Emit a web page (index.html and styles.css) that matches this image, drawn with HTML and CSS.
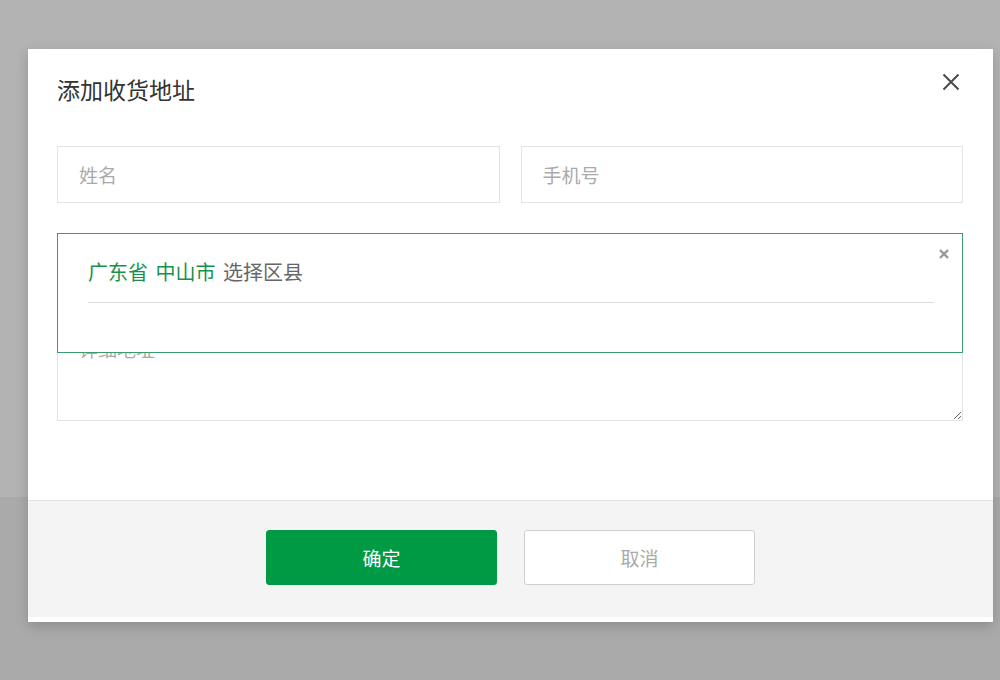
FILE: index.html
```html
<!DOCTYPE html>
<html lang="zh-CN">
<head>
    <meta charset="UTF-8">
    <meta name="viewport" content="width=device-width, initial-scale=1.0">
    <title>添加收货地址</title>
    <link rel="stylesheet" href="styles.css">
</head>
<body>
    <div class="dialog">
        <div class="dialog-header">
            <h2 class="dialog-title">添加收货地址</h2>
            <button class="dialog-close" aria-label="关闭">
                <svg width="18" height="18" viewBox="0 0 18 18">
                    <path d="M1.5 1.5 L16.5 16.5 M16.5 1.5 L1.5 16.5" stroke="#4a4a4a" stroke-width="2" fill="none"/>
                </svg>
            </button>
        </div>
        <div class="dialog-body">
            <div class="form-row">
                <input type="text" class="field" placeholder="姓名">
                <input type="text" class="field" placeholder="手机号">
            </div>
            <div class="region">
                <div class="field region-field"></div>
                <div class="region-popup">
                    <div class="region-path">
                        <span class="region-picked">广东省</span>
                        <span class="region-picked">中山市</span>
                        <span class="region-pending">选择区县</span>
                    </div>
                    <button class="region-close" aria-label="关闭">
                        <svg width="10" height="10" viewBox="0 0 10 10">
                            <path d="M1 1 L9 9 M9 1 L1 9" stroke="#999" stroke-width="2.4" fill="none"/>
                        </svg>
                    </button>
                </div>
            </div>
            <textarea class="field field-area" placeholder="详细地址"></textarea>
        </div>
        <div class="dialog-footer">
            <button class="btn btn-primary">确定</button>
            <button class="btn btn-default">取消</button>
        </div>
    </div>
</body>
</html>
```

FILE: styles.css
```css
body {
    margin: 0;
    height: 680px;
    font-family: "Microsoft YaHei", "Noto Sans CJK SC", "Noto Sans", sans-serif;
    background: linear-gradient(#b3b3b3 0, #b3b3b3 497px, #aaaaaa 497px);
    overflow: hidden;
}
.dialog {
    position: absolute;
    left: 28px;
    top: 49px;
    width: 965px;
    background-color: white;
    padding-bottom: 5px;
    box-shadow: 0 4px 12px rgba(0,0,0,0.18);
}
.dialog-header {
    position: relative;
    height: 97px;
    box-sizing: border-box;
    padding: 26px 29px 0;
}
.dialog-title {
    margin: 0;
    font-size: 23px;
    font-weight: normal;
    line-height: 28px;
    color: #333;
}
.dialog-close {
    position: absolute;
    top: 24px;
    right: 33px;
    width: 18px;
    height: 18px;
    padding: 0;
    border: none;
    background: none;
    display: flex;
}
.dialog-body {
    padding: 0 30px 79px 29px;
}
.form-row {
    display: grid;
    grid-template-columns: 1fr 1fr;
    gap: 21px;
    margin-bottom: 30px;
}
.field {
    display: block;
    box-sizing: border-box;
    width: 100%;
    height: 57px;
    padding: 0 21px;
    border: 1px solid #e3e3e3;
    background-color: white;
    font-family: inherit;
    font-size: 19px;
    color: #333;
    outline: none;
}
.field::placeholder {
    color: #aaa;
}
.region {
    position: relative;
    margin-bottom: 30px;
}
.region-popup {
    position: absolute;
    top: 0;
    left: 0;
    right: 0;
    height: 120px;
    box-sizing: border-box;
    padding: 0 28px 0 30px;
    border: 1px solid #3a9b6c;
    background-color: white;
}
.region-path {
    padding: 23px 0 15px;
    line-height: 30px;
    font-size: 20px;
    word-spacing: 3px;
    border-bottom: 1px solid #dcdcdc;
}
.region-picked {
    color: #16924c;
}
.region-pending {
    color: #666;
}
.region-close {
    position: absolute;
    top: 15px;
    right: 13px;
    width: 10px;
    height: 10px;
    padding: 0;
    border: none;
    background: none;
    display: flex;
}
.field-area {
    height: 101px;
    padding-top: 15px;
    line-height: 26px;
    resize: vertical;
}
.dialog-footer {
    display: flex;
    justify-content: center;
    gap: 27px;
    padding: 29px 0 32px;
    background-color: #f4f4f4;
    border-top: 1px solid #e2e2e2;
}
.btn {
    width: 231px;
    height: 55px;
    border-radius: 3px;
    font-family: inherit;
    font-size: 19px;
    cursor: pointer;
}
.btn-primary {
    background-color: #009a44;
    border: 1px solid #009a44;
    color: white;
}
.btn-default {
    background-color: white;
    border: 1px solid #cfcfcf;
    color: #aaa;
}
```
